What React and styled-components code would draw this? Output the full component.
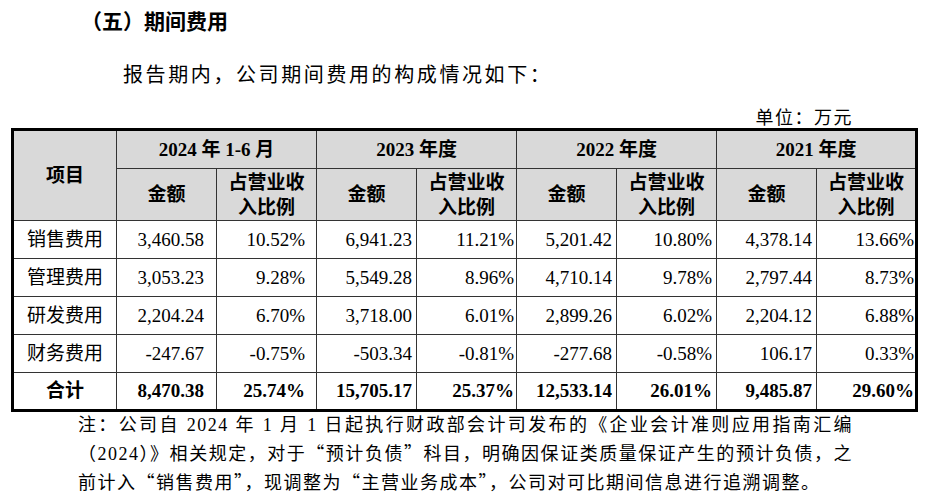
import React from 'react';
import styled, { createGlobalStyle } from 'styled-components';

const GlobalStyle = createGlobalStyle`
  body {
    margin: 0;
    background: #ffffff;
    color: #000000;
    font-family: "Liberation Serif", "Noto Sans CJK SC", serif;
  }
`;

const groups = ['2024 年 1-6 月', '2023 年度', '2022 年度', '2021 年度'];

// right padding of each number column, as measured on the scan
const padRight = [12, 11, 4, 2, 4, 4, 4, 1];

const rows = [
  ['销售费用', '3,460.58', '10.52%', '6,941.23', '11.21%', '5,201.42', '10.80%', '4,378.14', '13.66%'],
  ['管理费用', '3,053.23', '9.28%', '5,549.28', '8.96%', '4,710.14', '9.78%', '2,797.44', '8.73%'],
  ['研发费用', '2,204.24', '6.70%', '3,718.00', '6.01%', '2,899.26', '6.02%', '2,204.12', '6.88%'],
  ['财务费用', '-247.67', '-0.75%', '-503.34', '-0.81%', '-277.68', '-0.58%', '106.17', '0.33%'],
];

const total = ['合计', '8,470.38', '25.74%', '15,705.17', '25.37%', '12,533.14', '26.01%', '9,485.87', '29.60%'];

function App() {
  return (
    <Page>
      <GlobalStyle />
      <Title>（五）期间费用</Title>
      <Lead>报告期内，公司期间费用的构成情况如下：</Lead>
      <UnitRow>
        <Unit>单位：万元</Unit>
      </UnitRow>
      <Table>
        <colgroup>
          <col style={{ width: 104 }} />
          {padRight.map((_, i) => (
            <col key={i} style={{ width: 100 }} />
          ))}
        </colgroup>
        <thead>
          <HeadRow $h={39}>
            <Th rowSpan={2}>项目</Th>
            {groups.map((g) => (
              <Th key={g} colSpan={2}>{g}</Th>
            ))}
          </HeadRow>
          <HeadRow $h={52}>
            {groups.map((g) => (
              <React.Fragment key={g}>
                <Th>金额</Th>
                <Th>占营业收<br />入比例</Th>
              </React.Fragment>
            ))}
          </HeadRow>
        </thead>
        <tbody>
          {rows.map((r) => (
            <BodyRow key={r[0]}>
              <Name>{r[0]}</Name>
              {r.slice(1).map((v, i) => (
                <Num key={i} $pr={padRight[i]}>{v}</Num>
              ))}
            </BodyRow>
          ))}
          <BodyRow $bold>
            <Name>{total[0]}</Name>
            {total.slice(1).map((v, i) => (
              <Num key={i} $pr={padRight[i]}>{v}</Num>
            ))}
          </BodyRow>
        </tbody>
      </Table>
      <Note>
        <NoteLine $fill>注：公司自 2024 年 1 月 1 日起执行财政部会计司发布的《企业会计准则应用指南汇编</NoteLine>
        <NoteLine $fill>（2024）》相关规定，对于<Q>“</Q>预计负债<Q>”</Q>科目，明确因保证类质量保证产生的预计负债，之</NoteLine>
        <NoteLine>前计入<Q>“</Q>销售费用<Q>”</Q>，现调整为<Q>“</Q>主营业务成本<Q>”</Q>，公司对可比期间信息进行追溯调整。</NoteLine>
      </Note>
    </Page>
  );
}

export default App;

const Page = styled.div`
  width: 935px;
  height: 502px;
  display: flex;
  flex-direction: column;
  overflow: hidden;
`;

const Title = styled.h2`
  margin: 0 0 0 81px;
  font-family: "Noto Sans CJK SC", sans-serif;
  font-weight: 700;
  font-size: 21px;
  line-height: 40px;
`;

const Lead = styled.p`
  margin: 19px 0 0 123px;
  font-family: "Noto Sans CJK SC", sans-serif;
  font-size: 20px;
  letter-spacing: 2.6px;
  line-height: 30px;
`;

const UnitRow = styled.div`
  display: flex;
  justify-content: flex-end;
  padding-right: 82px;
  margin-top: 16px;
`;

const Unit = styled.span`
  font-family: "Noto Sans CJK SC", sans-serif;
  font-size: 18px;
  letter-spacing: 1.5px;
  line-height: 23px;
`;

const Table = styled.table`
  margin-left: 11px;
  width: 905px;
  table-layout: fixed;
  border-collapse: collapse;
  border: 3px solid #000;
  font-size: 19px;
`;

const HeadRow = styled.tr`
  height: ${(p) => p.$h}px;
  background: #d9d9d9;
`;

const Th = styled.th`
  border: 1px solid #333;
  padding: 0;
  font-weight: 700;
  font-size: 19px;
  line-height: 25px;
  text-align: center;
  vertical-align: middle;
`;

const BodyRow = styled.tr`
  height: 38px;
  font-weight: ${(p) => (p.$bold ? 700 : 400)};
`;

const Name = styled.td`
  border: 1px solid #333;
  padding: 0;
  text-align: center;
  line-height: 24px;
`;

const Num = styled.td`
  border: 1px solid #333;
  padding: 0 ${(p) => p.$pr}px 0 0;
  text-align: right;
  line-height: 24px;
  white-space: nowrap;
`;

const Note = styled.div`
  margin: 0 82px 0 78px;
  font-size: 18px;
  letter-spacing: 1.5px;
  line-height: 27px;
`;

const NoteLine = styled.div`
  text-align: justify;
  text-align-last: ${(p) => (p.$fill ? 'justify' : 'left')};
  white-space: nowrap;
`;

const Q = styled.span`
  font-family: "Noto Sans CJK SC", sans-serif;
  font-feature-settings: "fwid";
`;
